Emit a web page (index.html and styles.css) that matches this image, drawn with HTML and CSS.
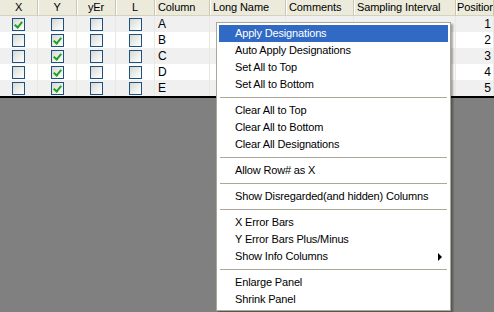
FILE: index.html
```html
<!DOCTYPE html>
<html lang="en">
<head>
    <meta charset="UTF-8">
    <title>Designations</title>
    <link rel="stylesheet" href="styles.css">
</head>
<body>
    <div class="sheet">
        <div class="row head">
            <div class="cell mid">X</div>
            <div class="cell mid">Y</div>
            <div class="cell mid">yEr</div>
            <div class="cell mid">L</div>
            <div class="cell">Column</div>
            <div class="cell">Long Name</div>
            <div class="cell">Comments</div>
            <div class="cell">Sampling Interval</div>
            <div class="cell">Position</div>
        </div>

        <div class="row odd">
            <div class="cell mid"><span class="box on"></span></div>
            <div class="cell mid"><span class="box"></span></div>
            <div class="cell mid"><span class="box"></span></div>
            <div class="cell mid"><span class="box"></span></div>
            <div class="cell">A</div>
            <div class="cell"></div>
            <div class="cell"></div>
            <div class="cell"></div>
            <div class="cell num">1</div>
        </div>
        <div class="row">
            <div class="cell mid"><span class="box"></span></div>
            <div class="cell mid"><span class="box on"></span></div>
            <div class="cell mid"><span class="box"></span></div>
            <div class="cell mid"><span class="box"></span></div>
            <div class="cell">B</div>
            <div class="cell"></div>
            <div class="cell"></div>
            <div class="cell"></div>
            <div class="cell num">2</div>
        </div>
        <div class="row odd">
            <div class="cell mid"><span class="box"></span></div>
            <div class="cell mid"><span class="box on"></span></div>
            <div class="cell mid"><span class="box"></span></div>
            <div class="cell mid"><span class="box"></span></div>
            <div class="cell">C</div>
            <div class="cell"></div>
            <div class="cell"></div>
            <div class="cell"></div>
            <div class="cell num">3</div>
        </div>
        <div class="row">
            <div class="cell mid"><span class="box"></span></div>
            <div class="cell mid"><span class="box on"></span></div>
            <div class="cell mid"><span class="box"></span></div>
            <div class="cell mid"><span class="box"></span></div>
            <div class="cell">D</div>
            <div class="cell"></div>
            <div class="cell"></div>
            <div class="cell"></div>
            <div class="cell num">4</div>
        </div>
        <div class="row odd">
            <div class="cell mid"><span class="box"></span></div>
            <div class="cell mid"><span class="box on"></span></div>
            <div class="cell mid"><span class="box"></span></div>
            <div class="cell mid"><span class="box"></span></div>
            <div class="cell">E</div>
            <div class="cell"></div>
            <div class="cell"></div>
            <div class="cell"></div>
            <div class="cell num">5</div>
        </div>
    </div>

    <div class="menu">
        <div class="item active">Apply Designations</div>
        <div class="item">Auto Apply Designations</div>
        <div class="item">Set All to Top</div>
        <div class="item">Set All to Bottom</div>
        <div class="sep"></div>
        <div class="item">Clear All to Top</div>
        <div class="item">Clear All to Bottom</div>
        <div class="item">Clear All Designations</div>
        <div class="sep"></div>
        <div class="item">Allow Row# as X</div>
        <div class="sep"></div>
        <div class="item">Show Disregarded(and hidden) Columns</div>
        <div class="sep"></div>
        <div class="item">X Error Bars</div>
        <div class="item">Y Error Bars Plus/Minus</div>
        <div class="item">Show Info Columns <span class="arrow"></span></div>
        <div class="sep"></div>
        <div class="item">Enlarge Panel</div>
        <div class="item">Shrink Panel</div>
    </div>
</body>
</html>
```

FILE: styles.css
```css
body {
    margin: 0;
    height: 312px;
    overflow: hidden;
    background: #808080;
    font-family: "Liberation Sans", Arial, sans-serif;
    font-size: 11px;
    color: #000;
}
.sheet {
    width: 494px;
    background: #fff;
    border-bottom: 2px solid #000;
    overflow: hidden;
}
.row {
    display: grid;
    grid-template-columns: 38px 39px 39px 39px 55px 76px 68px 102px 38px;
    height: 16px;
    background: #fff;
}
.row.odd {
    background: #f0f0f0;
}
.cell {
    border-right: 1px solid #ebe9df;
    padding: 0 3px;
    line-height: 16px;
    font-size: 12px;
    white-space: nowrap;
    overflow: hidden;
}
.cell.mid {
    display: flex;
    align-items: center;
    justify-content: center;
    padding: 0;
}
.cell.num {
    text-align: right;
    padding-right: 2px;
}
.head {
    background: #ebeadb;
}
.head .cell {
    font-size: 11px;
    line-height: 15px;
    letter-spacing: -0.1px;
    border-right: 1px solid #c9c6b4;
    box-shadow: inset 1px 0 0 #fff;
    border-bottom: 1px solid #d6d2bd;
}
.head .cell:first-child {
    box-shadow: none;
}
.head .cell:last-child {
    padding: 0 0 0 1px;
    text-overflow: clip;
}
.box {
    width: 11px;
    height: 11px;
    border: 1px solid #1c5180;
    background: linear-gradient(135deg, #d8d8d2 0%, #f4f4f2 70%, #fff 100%);
    position: relative;
}
.box.on::after {
    content: "";
    position: absolute;
    left: 3px;
    top: 1px;
    width: 3px;
    height: 6px;
    border: solid #21a121;
    border-width: 0 2px 2px 0;
    transform: rotate(40deg);
}
.menu {
    position: absolute;
    left: 216px;
    top: 22px;
    width: 229px;
    padding: 2px;
    background: #fff;
    border: 1px solid #aca899;
    box-shadow: 2px 2px 2px rgba(0, 0, 0, 0.35);
}
.item {
    height: 17px;
    line-height: 17px;
    padding: 0 6px 0 16px;
    letter-spacing: -0.15px;
    white-space: nowrap;
    display: flex;
    align-items: center;
    justify-content: space-between;
}
.item.active {
    background: #316ac5;
    color: #fff;
}
.sep {
    height: 9px;
    display: flex;
    align-items: center;
    padding: 0 1px;
}
.sep::before {
    content: "";
    flex: 1;
    height: 1px;
    background: #aca899;
}
.arrow {
    width: 0;
    height: 0;
    border-left: 4px solid #000;
    border-top: 4px solid transparent;
    border-bottom: 4px solid transparent;
}
```
